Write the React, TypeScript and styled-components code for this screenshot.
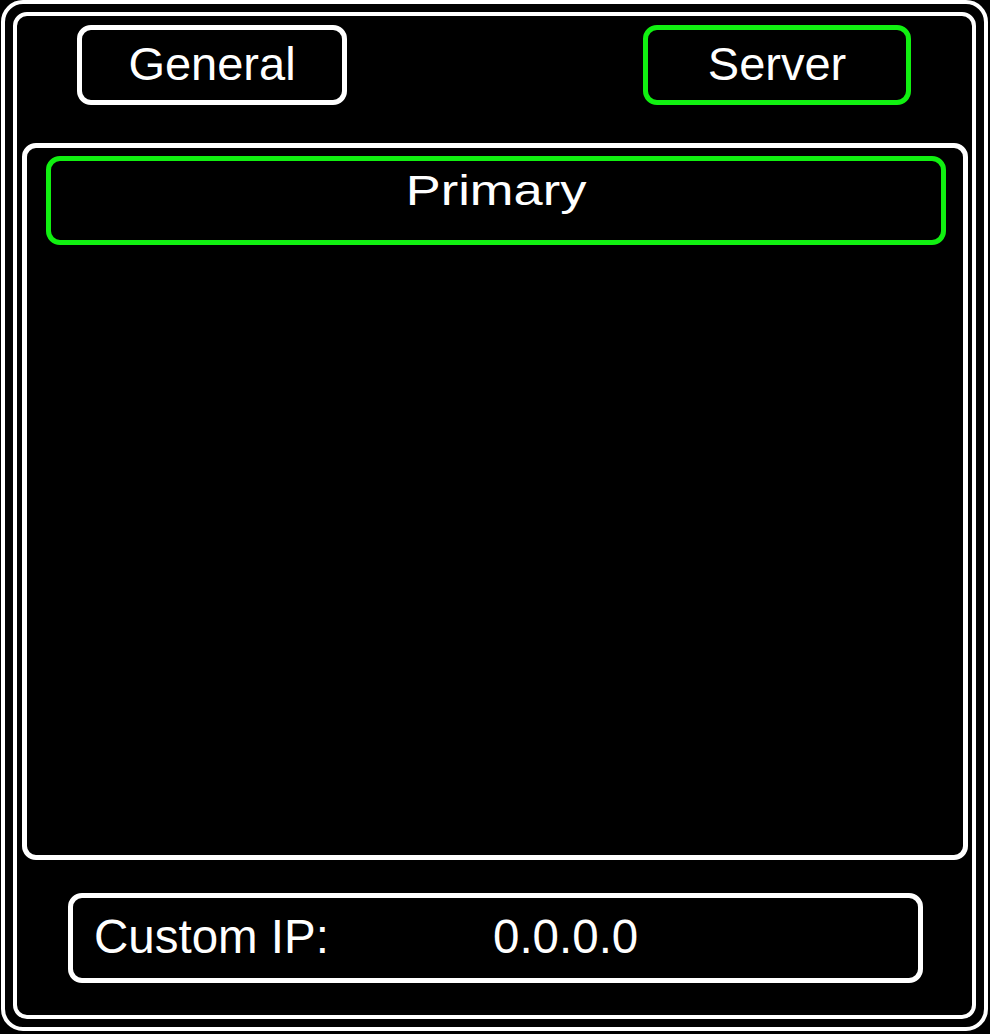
import React from 'react';
import styled, { createGlobalStyle } from 'styled-components';

const GlobalStyle = createGlobalStyle`
    html, body {
        margin: 0;
        padding: 0;
        background: #000;
    }
    body {
        font-family: 'Liberation Sans', Arial, sans-serif;
        color: #fff;
    }
`;

const GREEN = '#11f011';

const OuterFrame = styled.div`
    box-sizing: border-box;
    width: 987px;
    height: 1031px;
    margin: 0 0 0 1px;
    padding: 8px;
    border: 4px solid #fff;
    border-radius: 22px;
    background: #000;
`;

const InnerFrame = styled.div`
    box-sizing: border-box;
    height: 100%;
    border: 4px solid #fff;
    border-radius: 14px;
    display: flex;
    flex-direction: column;
    padding: 9px 0 32px;
`;

const TabRow = styled.div`
    display: flex;
    justify-content: space-between;
    padding: 0 61px 0 60px;
`;

const Tab = styled.button<{ $active?: boolean; $w: number }>`
    box-sizing: border-box;
    width: ${(p) => p.$w}px;
    height: 80px;
    background: #000;
    color: #fff;
    border: 5px solid ${(p) => (p.$active ? GREEN : '#fff')};
    border-radius: 14px;
    font-family: 'Liberation Sans', Arial, sans-serif;
    font-size: 47px;
    line-height: 1;
    padding: 0 0 4px;
    cursor: pointer;
`;

const Panel = styled.div`
    box-sizing: border-box;
    flex: 1;
    margin: 38px 4px 0 5px;
    border: 5px solid #fff;
    border-radius: 14px;
    padding: 8px 17px 0 19px;
`;

const ServerRow = styled.div<{ $selected?: boolean }>`
    box-sizing: border-box;
    height: 89px;
    border: 5px solid ${(p) => (p.$selected ? GREEN : '#fff')};
    border-radius: 14px;
    display: flex;
    align-items: center;
    justify-content: center;
    padding-bottom: 20px;
`;

const RowLabel = styled.span`
    display: inline-block;
    font-size: 43px;
    line-height: 1;
    transform: scaleX(1.22);
`;

const IpBox = styled.div`
    box-sizing: border-box;
    height: 90px;
    margin: 33px 49px 0 51px;
    border: 5px solid #fff;
    border-radius: 14px;
    display: grid;
    grid-template-columns: 399px 1fr;
    align-items: center;
    padding: 0 0 2px 21px;
    font-size: 47.5px;
    line-height: 1;
`;

const IpLabel = styled.span``;
const IpValue = styled.span``;

export default function App() {
    return (
        <>
            <GlobalStyle />
            <OuterFrame>
                <InnerFrame>
                    <TabRow>
                        <Tab $w={270}>General</Tab>
                        <Tab $w={268} $active>
                            Server
                        </Tab>
                    </TabRow>
                    <Panel>
                        <ServerRow $selected>
                            <RowLabel>Primary</RowLabel>
                        </ServerRow>
                    </Panel>
                    <IpBox>
                        <IpLabel>Custom IP:</IpLabel>
                        <IpValue>0.0.0.0</IpValue>
                    </IpBox>
                </InnerFrame>
            </OuterFrame>
        </>
    );
}
